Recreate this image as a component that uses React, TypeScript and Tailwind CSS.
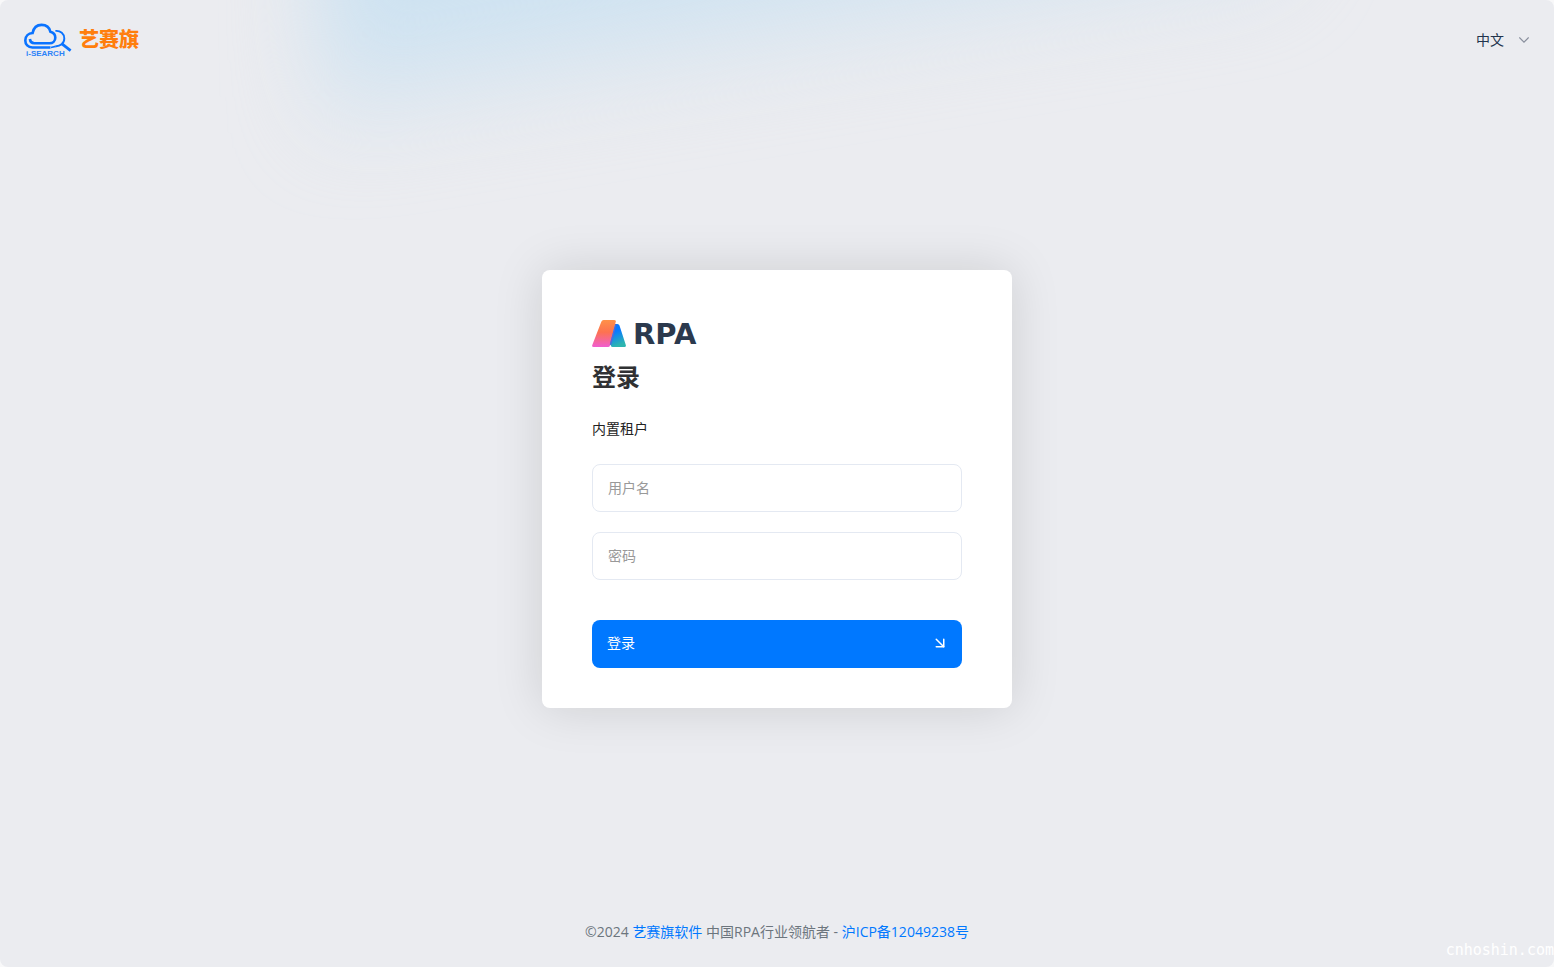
import { ArrowDownRight } from 'lucide-react';

function CompanyLogo() {
  return (
    <a href="#" aria-label="艺赛旗 i-Search" className="flex items-center gap-[7px] text-[#ff7e0d]">
      <svg viewBox="0 0 48 34" className="w-12 h-[34px]" fill="none" aria-hidden="true">
        {/* magnifier, partly hidden by the cloud */}
        <path
          d="M31.4 7.9 C36.6 7.4 40.3 10.8 40.3 15.4 C40.3 20.4 36 23.6 31.4 23.2"
          stroke="#0a73ff"
          strokeWidth="1.9"
        />
        <path d="M38 20.8 L46.6 27.6" stroke="#0a73ff" strokeWidth="2.8" />
        {/* cloud */}
        <path
          d="M26.5 24.5 L8.4 24.5 C4 24.5 1.3 21.4 1.3 17.4 C1.3 13.2 4.6 10.4 8.6 10 C9.6 5 13 1.9 17.6 1.9 C22.2 1.9 25.4 4.5 26.4 8.8 C29.6 9.6 31.3 12 31.3 14.7 C31.3 18 28.6 20.2 25.6 20.2 L10.4 20.2 C7.6 20.2 6.2 18.6 5.9 16"
          stroke="#0a73ff"
          strokeWidth="2.6"
        />
        <path d="M27 24.5 L31.6 23.4" stroke="#0a73ff" strokeWidth="1.6" />
        <text x="2" y="33" fontSize="8" fontWeight="700" fill="#2b82f8" className="font-['Liberation_Sans',sans-serif]">
          i-SEARCH
        </text>
      </svg>
      <span className="text-[20px] leading-6 font-black">艺赛旗</span>
    </a>
  );
}

function ProductLogo() {
  return (
    <div className="flex items-center gap-[7px] h-7 text-[#2b394d]">
      <svg viewBox="0 0 34 28" className="w-[34px] h-7" aria-hidden="true">
        <defs>
          <linearGradient id="warm" x1="0" y1="0" x2="0" y2="1">
            <stop offset="0" stopColor="#ff9148" />
            <stop offset="0.45" stopColor="#fd7250" />
            <stop offset="1" stopColor="#f05ed0" />
          </linearGradient>
          <linearGradient id="cool" x1="0" y1="0" x2="0.3" y2="1">
            <stop offset="0.4" stopColor="#087aff" />
            <stop offset="1" stopColor="#2db5b0" />
          </linearGradient>
        </defs>
        <path
          d="M11.5 0 H22 Q24.4 0 23.7 2 L18 25.5 Q17.6 27 16 27 H1.5 Q-0.4 27 0.3 25 L9.3 1.8 Q10 0 11.5 0Z"
          fill="url(#warm)"
        />
        <path
          d="M23.2 4 H25.4 Q27 4 27.5 5.5 L33.8 25 Q34.3 27 32.5 27 H20.5 Q18.4 27 18.8 25 L17.8 24.4 Z"
          fill="url(#cool)"
        />
        <path d="M23.2 4 L24.4 4.4 L19.2 25 L17.8 24.4 Z" fill="#5468d8" />
      </svg>
      <span className="text-[29px] leading-7 font-bold font-['DejaVu_Sans',sans-serif]">RPA</span>
    </div>
  );
}

function LanguageSelect() {
  return (
    <label className="flex items-center gap-[15px] pb-px pr-px text-[#22344d]">
      <select aria-label="语言" className="appearance-none bg-transparent text-sm leading-5 outline-none">
        <option>中文</option>
      </select>
      <svg viewBox="0 0 10 6" className="w-[10px] h-[6px]" fill="none" aria-hidden="true">
        <path d="M0.3 0.4 L5 5.1 L9.7 0.4" stroke="#8a909e" strokeWidth="1.2" />
      </svg>
    </label>
  );
}

function Field({ id, type, label }: { id: string; type: string; label: string }) {
  return (
    <input
      id={id}
      name={id}
      type={type}
      aria-label={label}
      placeholder={label}
      className="block w-full h-12 px-[15px] pb-0.5 rounded-lg border border-[#e4e9f2] bg-white text-sm text-[#333] placeholder:text-[#999] outline-none focus:border-[#0078ff]"
    />
  );
}

function LoginCard() {
  return (
    <form
      onSubmit={e => e.preventDefault()}
      className="w-full max-w-[470px] px-[50px] pt-[50px] pb-10 rounded-lg bg-white shadow-[0_0_50px_rgba(0,0,0,0.13)]"
    >
      <ProductLogo />
      <h1 className="mt-[11px] text-2xl leading-9 font-bold text-[#303133]">登录</h1>
      <p className="mt-6 text-sm leading-5 text-[#222]">内置租户</p>
      <div className="mt-[25px] space-y-5">
        <Field id="username" type="text" label="用户名" />
        <Field id="password" type="password" label="密码" />
      </div>
      <button
        type="submit"
        className="mt-10 flex w-full h-12 items-center justify-between pl-[15px] pr-[13px] pb-0.5 rounded-lg bg-[#0078ff] text-sm text-white"
      >
        登录
        <ArrowDownRight size={18} strokeWidth={2} aria-hidden="true" />
      </button>
    </form>
  );
}

export default function App() {
  return (
    <div className="bg-[#f8f8f9] font-['Open_Sans','Noto_Sans_CJK_SC',sans-serif]">
      <div className="relative isolate flex min-h-screen flex-col overflow-hidden rounded-lg bg-[#ebecf0]">
        {/* soft light coming from the top edge */}
        <svg
          viewBox="0 0 1554 260"
          preserveAspectRatio="none"
          className="absolute inset-x-0 top-0 -z-10 w-full h-[260px]"
          aria-hidden="true"
        >
          <defs>
            <filter
              id="glow"
              filterUnits="userSpaceOnUse"
              x="0"
              y="-400"
              width="1554"
              height="700"
              colorInterpolationFilters="sRGB"
            >
              <feGaussianBlur stdDeviation="42 54" />
            </filter>
          </defs>
          <path d="M312 -300 L1360 -300 L1280 -55 L320 98 Z" fill="#cde2f1" filter="url(#glow)" />
        </svg>

        <header className="flex h-20 items-center justify-between px-6">
          <CompanyLogo />
          <LanguageSelect />
        </header>

        <main className="flex flex-1 items-center justify-center">
          <LoginCard />
        </main>

        <footer className="flex h-[69px] items-center justify-center pb-0.5 text-sm text-[#6c757d]">
          <p>
            ©2024 <a href="#" className="text-[#0078ff]">艺赛旗软件</a> 中国RPA行业领航者 -{' '}
            <a href="#" className="text-[#0078ff]">沪ICP备12049238号</a>
          </p>
        </footer>

        <span className="absolute right-0 bottom-2 text-[15px] leading-[18px] text-white font-['DejaVu_Sans_Mono',monospace]">
          cnhoshin.com
        </span>
      </div>
    </div>
  );
}
